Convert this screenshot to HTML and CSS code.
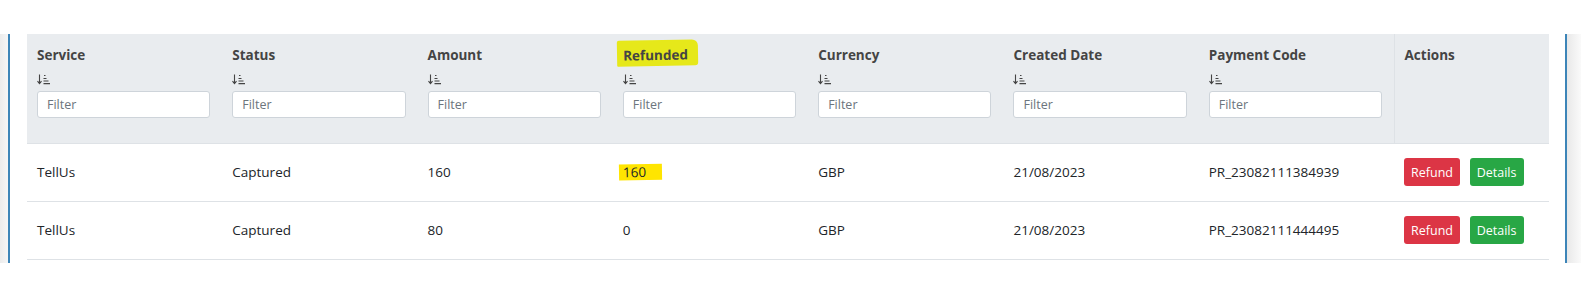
FILE: index.html
```html
<!DOCTYPE html>
<html lang="en">
<head>
    <meta charset="UTF-8">
    <meta name="viewport" content="width=device-width, initial-scale=1.0">
    <title>Payments</title>
    <link rel="stylesheet" href="styles.css">
</head>
<body>
    <div class="frame">
        <div class="side side-left"></div>
        <div class="content">
            <table class="payments">
                <thead>
                    <tr>
                        <th>
                            <div class="th-title">Service</div>
                            <div class="sort-icon"><svg width="14" height="11" viewBox="0 0 14 11"><path d="M2.5 0.5v9M0.5 7.2l2 2.5 2-2.5M7 1.5h1.5M6.5 4.5h3M6.5 7h5M6.5 9.6h6.5" fill="none" stroke="#444" stroke-width="1.1"/></svg></div>
                            <input type="text" class="filter" placeholder="Filter">
                        </th>
                        <th>
                            <div class="th-title">Status</div>
                            <div class="sort-icon"><svg width="14" height="11" viewBox="0 0 14 11"><path d="M2.5 0.5v9M0.5 7.2l2 2.5 2-2.5M7 1.5h1.5M6.5 4.5h3M6.5 7h5M6.5 9.6h6.5" fill="none" stroke="#444" stroke-width="1.1"/></svg></div>
                            <input type="text" class="filter" placeholder="Filter">
                        </th>
                        <th>
                            <div class="th-title">Amount</div>
                            <div class="sort-icon"><svg width="14" height="11" viewBox="0 0 14 11"><path d="M2.5 0.5v9M0.5 7.2l2 2.5 2-2.5M7 1.5h1.5M6.5 4.5h3M6.5 7h5M6.5 9.6h6.5" fill="none" stroke="#444" stroke-width="1.1"/></svg></div>
                            <input type="text" class="filter" placeholder="Filter">
                        </th>
                        <th>
                            <div class="th-title"><span class="marker marker-head">Refunded</span></div>
                            <div class="sort-icon"><svg width="14" height="11" viewBox="0 0 14 11"><path d="M2.5 0.5v9M0.5 7.2l2 2.5 2-2.5M7 1.5h1.5M6.5 4.5h3M6.5 7h5M6.5 9.6h6.5" fill="none" stroke="#444" stroke-width="1.1"/></svg></div>
                            <input type="text" class="filter" placeholder="Filter">
                        </th>
                        <th>
                            <div class="th-title">Currency</div>
                            <div class="sort-icon"><svg width="14" height="11" viewBox="0 0 14 11"><path d="M2.5 0.5v9M0.5 7.2l2 2.5 2-2.5M7 1.5h1.5M6.5 4.5h3M6.5 7h5M6.5 9.6h6.5" fill="none" stroke="#444" stroke-width="1.1"/></svg></div>
                            <input type="text" class="filter" placeholder="Filter">
                        </th>
                        <th>
                            <div class="th-title">Created Date</div>
                            <div class="sort-icon"><svg width="14" height="11" viewBox="0 0 14 11"><path d="M2.5 0.5v9M0.5 7.2l2 2.5 2-2.5M7 1.5h1.5M6.5 4.5h3M6.5 7h5M6.5 9.6h6.5" fill="none" stroke="#444" stroke-width="1.1"/></svg></div>
                            <input type="text" class="filter" placeholder="Filter">
                        </th>
                        <th>
                            <div class="th-title">Payment Code</div>
                            <div class="sort-icon"><svg width="14" height="11" viewBox="0 0 14 11"><path d="M2.5 0.5v9M0.5 7.2l2 2.5 2-2.5M7 1.5h1.5M6.5 4.5h3M6.5 7h5M6.5 9.6h6.5" fill="none" stroke="#444" stroke-width="1.1"/></svg></div>
                            <input type="text" class="filter" placeholder="Filter">
                        </th>
                        <th class="actions-col">
                            <div class="th-title">Actions</div>
                        </th>
                    </tr>
                </thead>
                <tbody>
                    <tr>
                        <td>TellUs</td>
                        <td>Captured</td>
                        <td>160</td>
                        <td><span class="marker marker-cell">160</span></td>
                        <td>GBP</td>
                        <td>21/08/2023</td>
                        <td>PR_23082111384939</td>
                        <td class="actions">
                            <button class="btn btn-red">Refund</button>
                            <button class="btn btn-green">Details</button>
                        </td>
                    </tr>
                    <tr>
                        <td>TellUs</td>
                        <td>Captured</td>
                        <td>80</td>
                        <td>0</td>
                        <td>GBP</td>
                        <td>21/08/2023</td>
                        <td>PR_23082111444495</td>
                        <td class="actions">
                            <button class="btn btn-red">Refund</button>
                            <button class="btn btn-green">Details</button>
                        </td>
                    </tr>
                </tbody>
            </table>
        </div>
        <div class="side side-right"></div>
    </div>
</body>
</html>
```

FILE: styles.css
```css
body {
    margin: 0;
    background-color: #ffffff;
    font-family: "Segoe UI", "Open Sans", Arial, sans-serif;
    color: #212529;
}
.frame {
    display: flex;
    height: 229px;
    margin-top: 34px;
}
.side-left {
    width: 8px;
    background: linear-gradient(to right, #ececec, #f6f6f6);
}
.side-right {
    width: 14px;
    background: linear-gradient(to right, #e9e9e9, #fafafa);
}
.content {
    flex: 1;
    border-left: 2px solid #3d85b8;
    border-right: 2px solid #3d85b8;
    padding: 0 16px 0 17px;
    background-color: #ffffff;
}
.payments {
    width: 1522px;
    border-collapse: collapse;
    table-layout: fixed;
    font-size: 13.5px;
}
.payments th {
    width: 195.3px;
    height: 109px;
    box-sizing: border-box;
    padding: 11px 12px 0 10px;
    background-color: #e9ecef;
    text-align: left;
    vertical-align: top;
}
.payments th.actions-col {
    width: 155px;
    border-left: 1px solid #dee2e6;
}
.th-title {
    font-size: 13.5px;
    font-weight: 700;
    color: #444;
    line-height: 20px;
}
.sort-icon {
    height: 11px;
    margin-top: 9px;
    line-height: 0;
}
.filter {
    display: block;
    width: 100%;
    box-sizing: border-box;
    height: 27px;
    margin-top: 6px;
    padding: 0 9px;
    border: 1px solid #ced4da;
    border-radius: 3px;
    font-family: inherit;
    font-size: 12.5px;
}
.filter::placeholder {
    color: #6c757d;
}
.payments td {
    height: 57px;
    padding: 0 10px;
    border-top: 1px solid #dee2e6;
    vertical-align: middle;
}
.payments tbody tr:last-child td {
    border-bottom: 1px solid #dee2e6;
}
.marker {
    display: inline-block;
    transform: rotate(-1deg);
}
.marker-head {
    background-color: #e6e81a;
    padding: 5px 10px 1px 6px;
    margin: -5px -10px -1px -6px;
    border-radius: 2px 6px 3px 1px;
}
.marker-cell {
    background-color: #ffe500;
    padding: 0 16px 0 4px;
    margin: 0 -16px 0 -4px;
    line-height: 16px;
}
.actions {
    white-space: nowrap;
}
.btn {
    height: 28px;
    padding: 0 7px;
    border: none;
    border-radius: 3px;
    color: #ffffff;
    font-family: inherit;
    font-size: 12.5px;
}
.btn-red {
    background-color: #dc3545;
    width: 56px;
}
.btn-green {
    background-color: #28a745;
    width: 54px;
    margin-left: 6px;
}
```
